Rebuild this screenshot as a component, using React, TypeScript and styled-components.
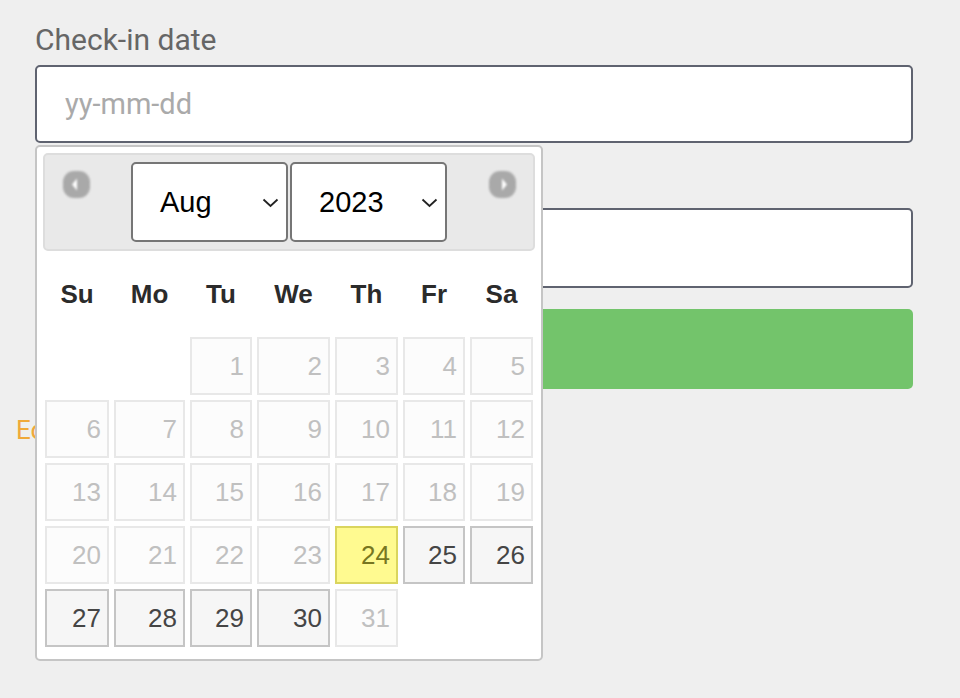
import styled, { createGlobalStyle } from "styled-components";

const GlobalStyle = createGlobalStyle`
  html, body {
    margin: 0;
    padding: 0;
    background: #efefef;
  }
  body {
    font-family: "Liberation Sans", Arial, sans-serif;
    height: 698px;
    overflow: hidden;
  }
`;

const Page = styled.div`
  position: relative;
  padding: 23px 47px 0 35px;
`;

const Label = styled.label`
  display: block;
  font-family: Roboto, "Liberation Sans", sans-serif;
  font-size: 30px;
  line-height: 34px;
  color: #666;
`;

const TextInput = styled.input`
  display: block;
  box-sizing: border-box;
  width: 100%;
  height: ${(p) => (p.$first ? 78 : 80)}px;
  margin: ${(p) => (p.$first ? "8px" : "0")} 0 0;
  padding: 0 28px;
  border: 2px solid #5f6370;
  border-radius: 5px;
  background: #fff;
  font-family: Roboto, "Liberation Sans", sans-serif;
  font-size: 29px;
  color: #333;
  outline: none;
  &::placeholder {
    color: #aaa;
  }
`;

/* second field: its label sits under the open datepicker */
const Field = styled.div`
  padding-top: 65px;
`;

const SubmitButton = styled.button`
  display: block;
  width: 100%;
  height: 80px;
  margin-top: 21px;
  border: none;
  border-radius: 5px;
  background: #73c46b;
`;

const EditLink = styled.a`
  display: inline-block;
  margin: 26px 0 0 -19px;
  font-family: Roboto, "Liberation Sans", sans-serif;
  font-size: 26px;
  color: #f0a93a;
  text-decoration: none;
`;

/* datepicker overlay */
const Picker = styled.div`
  position: absolute;
  top: 145px;
  left: 35px;
  z-index: 10;
  box-sizing: border-box;
  width: 508px;
  padding: 6px 6px 12px;
  border: 2px solid #c5c5c5;
  border-radius: 5px;
  background: #fff;
`;

const Header = styled.div`
  display: flex;
  justify-content: space-between;
  align-items: center;
  height: 94px;
  border: 2px solid #dddddd;
  border-radius: 5px;
  background: #e9e9e9;
`;

const NavIcon = styled.svg`
  align-self: flex-start;
  width: 27px;
  height: 27px;
  margin: 16px 17px 0 18px;
  filter: blur(0.9px);
`;

const Selects = styled.div`
  display: flex;
  gap: 2px;
`;

const SelectBox = styled.div`
  position: relative;
  box-sizing: border-box;
  width: 157px;
  height: 80px;
  border: 2px solid #767676;
  border-radius: 5px;
  background: #fff;
  display: flex;
  align-items: center;
  padding-left: 27px;
  font-size: 29px;
  color: #000;
`;

const Chevron = styled.svg`
  position: absolute;
  right: 7px;
  top: 34px;
  width: 17px;
  height: 10px;
`;

const Grid = styled.div`
  display: grid;
  grid-template-columns: 64px 71px 62px 73px 63px 62px 63px;
  column-gap: 5px;
  row-gap: 5px;
  margin: 0 2px;
`;

const WeekDay = styled.div`
  height: 86px;
  display: flex;
  align-items: center;
  justify-content: center;
  font-size: 26px;
  font-weight: bold;
  color: #2b2b2b;
  margin-bottom: -5px;
`;

const Day = styled.div`
  box-sizing: border-box;
  height: 58px;
  display: flex;
  align-items: center;
  justify-content: flex-end;
  padding-right: 6px;
  font-size: 26px;
  border: 2px solid
    ${(p) => (p.$state === "today" ? "#dad55e" : p.$state === "open" ? "#c5c5c5" : "#e8e8e8")};
  background: ${(p) => (p.$state === "today" ? "#fffa90" : p.$state === "open" ? "#f6f6f6" : "#fcfcfc")};
  color: ${(p) => (p.$state === "today" ? "#777620" : p.$state === "open" ? "#454545" : "#c0c0c0")};
`;

const Blank = styled.div``;

const weekDays = ["Su", "Mo", "Tu", "We", "Th", "Fr", "Sa"];

const Arrow = ({ dir }: { dir: "prev" | "next" }) => (
  <NavIcon viewBox="0 0 27 27">
    <rect x="0" y="0" width="27" height="27" rx="11" fill="#a9a9a9" />
    <polygon points={dir === "prev" ? "9,13.5 14,7.5 14,19.5" : "18,13.5 13,7.5 13,19.5"} fill="#fff" />
  </NavIcon>
);

const DatePicker = () => {
  const cells: (number | null)[] = [null, null];
  for (let d = 1; d <= 31; d++) cells.push(d);

  const stateOf = (d: number) => (d === 24 ? "today" : d > 24 && d <= 30 ? "open" : "off");

  return (
    <Picker>
      <Header>
        <Arrow dir="prev" />
        <Selects>
          <SelectBox>
            Aug
            <Chevron viewBox="0 0 17 10">
              <polyline points="1.5,1.5 8.5,8 15.5,1.5" fill="none" stroke="#222" strokeWidth="1.8" />
            </Chevron>
          </SelectBox>
          <SelectBox>
            2023
            <Chevron viewBox="0 0 17 10">
              <polyline points="1.5,1.5 8.5,8 15.5,1.5" fill="none" stroke="#222" strokeWidth="1.8" />
            </Chevron>
          </SelectBox>
        </Selects>
        <Arrow dir="next" />
      </Header>
      <Grid>
        {weekDays.map((w) => (
          <WeekDay key={w}>{w}</WeekDay>
        ))}
        {cells.map((d, i) =>
          d === null ? <Blank key={"b" + i} /> : <Day key={d} $state={stateOf(d)}>{d}</Day>
        )}
      </Grid>
    </Picker>
  );
};

export default function App() {
  return (
    <Page>
      <GlobalStyle />
      <Label>Check-in date</Label>
      <TextInput $first placeholder="yy-mm-dd" />
      <Field>
        <TextInput aria-label="Check-out date" />
      </Field>
      <SubmitButton aria-label="Search" />
      <EditLink href="#">Edit</EditLink>
      <DatePicker />
    </Page>
  );
}
